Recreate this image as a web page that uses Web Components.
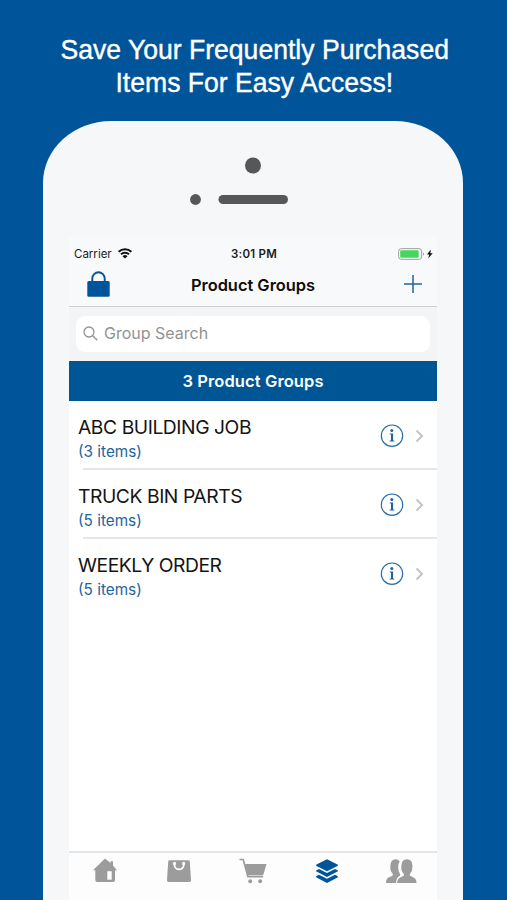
<!DOCTYPE html>
<html lang="en">
<head>
<meta charset="utf-8">
<title>Product Groups</title>
<style>
  html, body {
    margin: 0;
    height: 100%;
  }

  body {
    overflow: hidden;
    background: #005499;
    font-family: Inter, "Liberation Sans", sans-serif;
  }
</style>
</head>
<body>
<promo-page>
  <span slot="line1">Save Your Frequently Purchased</span>
  <span slot="line2">Items For Easy Access!</span>
  <phone-frame>
    <status-bar carrier="Carrier" time="3:01 PM"></status-bar>
    <nav-bar>Product Groups</nav-bar>
    <search-bar>Group Search</search-bar>
    <group-banner>3 Product Groups</group-banner>
    <group-list></group-list>
    <tab-bar></tab-bar>
  </phone-frame>
</promo-page>

<script>
class PromoPage extends HTMLElement {
  constructor() {
    super();
    this.attachShadow({ mode: "open" });
    this.shadowRoot.innerHTML = `
      <style>
        :host {
          box-sizing: border-box;
          display: flex;
          flex-direction: column;
          height: 900px;
          width: 507px;
          padding: 0 44px 0 43px;
          overflow: hidden;
        }

        header {
          box-sizing: border-box;
          height: 121px;
          padding: 33px 0 0 3px;
          flex: none;
          display: flex;
          flex-direction: column;
          align-items: center;
          color: #fff;
          font: 28px/33px "Liberation Sans", Arial, sans-serif;
          white-space: nowrap;
        }

        .line {
          transform: scaleX(0.949);
          -webkit-text-stroke: 0.4px #fff;
        }
      </style>
      <header>
        <div class="line"><slot name="line1"></slot></div>
        <div class="line"><slot name="line2"></slot></div>
      </header>
      <slot></slot>
    `;
  }
}

class PhoneFrame extends HTMLElement {
  constructor() {
    super();
    this.attachShadow({ mode: "open" });
    this.shadowRoot.innerHTML = `
      <style>
        :host {
          box-sizing: border-box;
          display: flex;
          flex-direction: column;
          flex: 1;
          padding: 0 26px;
          border-radius: 68px 68px 0 0 / 62px 62px 0 0;
          background: #f5f7f9;
        }

        .top {
          flex: none;
          height: 114px;
        }

        .top svg {
          display: block;
        }

        .screen {
          flex: 1;
          display: flex;
          flex-direction: column;
          background: #fff;
        }
      </style>
      <div class="top">
        <svg width="368" height="114" fill="#575757">
          <circle cx="184" cy="44.500" r="8"/>
          <circle cx="126.500" cy="78.500" r="5.400"/>
          <rect x="149.500" y="74" width="69.500" height="9" rx="4.500"/>
        </svg>
      </div>
      <div class="screen"><slot></slot></div>
    `;
  }
}

class StatusBar extends HTMLElement {
  constructor() {
    super();
    this.attachShadow({ mode: "open" });
  }

  connectedCallback() {
    this.shadowRoot.innerHTML = `
      <style>
        :host {
          box-sizing: border-box;
          display: grid;
          grid-template-columns: 1fr auto 1fr;
          align-items: center;
          height: 29px;
          padding: 8px 3px 0 5px;
          background: #f8f9fa;
          color: #1c1c1c;
          font-size: 11.5px;
        }

        .left {
          display: flex;
          align-items: center;
          gap: 6px;
        }

        .time {
          font-weight: 600;
          letter-spacing: 0.25px;
        }

        .right {
          justify-self: end;
        }

        svg {
          display: block;
        }
      </style>
      <div class="left">
        <span>${this.getAttribute("carrier")}</span>
        <svg width="14" height="11" viewBox="0 0 14 11">
          <path d="M0.600 3.900a9 9 0 0 1 12.800 0M3 6.300a5.700 5.700 0 0 1 8 0" fill="none" stroke="#111" stroke-width="2"/>
          <path d="M7 10.600 4.500 8.300a3.600 3.600 0 0 1 5 0z" fill="#111"/>
        </svg>
      </div>
      <span class="time">${this.getAttribute("time")}</span>
      <svg class="right" width="36" height="12" viewBox="0 0 36 12">
        <rect x="0.700" y="0.700" width="23" height="10.600" rx="2.600" fill="#fff" stroke="#9b9b9b"/>
        <rect x="2.200" y="2.200" width="18.500" height="7.600" rx="1" fill="#45d75e"/>
        <path d="M25 4.400a1.800 1.800 0 0 1 0 3.200z" fill="#9b9b9b"/>
        <path d="M32.800 1.600 29 6.600h2.300L30.200 10.400l4.500-5.200h-2.300z" fill="#111"/>
      </svg>
    `;
  }
}

class NavBar extends HTMLElement {
  constructor() {
    super();
    this.attachShadow({ mode: "open" });
    this.shadowRoot.innerHTML = `
      <style>
        :host {
          box-sizing: border-box;
          display: grid;
          grid-template-columns: 1fr auto 1fr;
          align-items: center;
          height: 43px;
          padding: 0 15px 1px 18px;
          border-bottom: 1px solid #cfd0d2;
          background: #f8f9fa;
        }

        .title {
          margin-right: 3px;
          color: #0c0c0c;
          font-size: 16.4px;
          font-weight: 600;
          white-space: nowrap;
        }

        svg {
          display: block;
        }

        .lock {
          margin-top: -2px;
        }

        .add {
          justify-self: end;
          margin-top: -1px;
        }
      </style>
      <svg class="lock" width="24" height="26" viewBox="0 0 24 26">
        <path d="M5.300 11V7.500a6.200 6.200 0 0 1 12.400 0V11" fill="none" stroke="#005499" stroke-width="1.900"/>
        <rect x="0.300" y="10" width="22.400" height="15.800" rx="1.500" fill="#005499"/>
      </svg>
      <div class="title"><slot></slot></div>
      <svg class="add" width="18" height="18" viewBox="0 0 18 18">
        <path d="M9 0v18M0 9h18" stroke="#20669f" stroke-width="1.500"/>
      </svg>
    `;
  }
}

class SearchBar extends HTMLElement {
  constructor() {
    super();
    this.attachShadow({ mode: "open" });
    this.shadowRoot.innerHTML = `
      <style>
        :host {
          box-sizing: border-box;
          display: block;
          height: 54px;
          padding: 9px 7px;
          background: #f3f4f5;
        }

        .field {
          box-sizing: border-box;
          display: flex;
          align-items: center;
          gap: 6px;
          height: 36px;
          padding: 0 7px 2px;
          border-radius: 9px;
          background: #fff;
          color: #929292;
          font-size: 16px;
        }
      </style>
      <div class="field">
        <svg width="15" height="15" viewBox="0 0 15 15" fill="none" stroke="#929292" stroke-width="1.300">
          <circle cx="6" cy="6" r="5"/>
          <path d="m9.700 9.700 4.600 4.600"/>
        </svg>
        <span><slot></slot></span>
      </div>
    `;
  }
}

class GroupBanner extends HTMLElement {
  constructor() {
    super();
    this.attachShadow({ mode: "open" });
    this.shadowRoot.innerHTML = `
      <style>
        :host {
          display: flex;
          align-items: center;
          justify-content: center;
          height: 40px;
          background: #005594;
          color: #fff;
          font-size: 16.5px;
          font-weight: 600;
          letter-spacing: 0.1px;
        }
      </style>
      <span><slot></slot></span>
    `;
  }
}

class GroupItem extends HTMLElement {
  constructor() {
    super();
    this.attachShadow({ mode: "open" });
  }

  set group(group) {
    this._group = group;
    this.render();
  }

  render() {
    this.shadowRoot.innerHTML = `
      <style>
        :host {
          box-sizing: border-box;
          display: flex;
          align-items: center;
          height: 69px;
          padding: 0 13px 0 9px;
          background: linear-gradient(#e6e6e8, #e6e6e8) 14px 100% / 100% 2px no-repeat;
        }

        :host(:last-child) {
          background: none;
        }

        .text {
          flex: 1;
          padding-top: 6px;
        }

        .name {
          color: #141414;
          font-size: 19.3px;
          line-height: 25px;
          letter-spacing: -0.45px;
        }

        .count {
          color: #1d649f;
          font-size: 15.3px;
          line-height: 23px;
        }

        .info {
          margin-right: 11px;
        }
      </style>
      <div class="text">
        <div class="name">${this._group.name}</div>
        <div class="count">(${this._group.count} items)</div>
      </div>
      <svg class="info" width="24" height="24" viewBox="0 0 24 24">
        <circle cx="12" cy="11.700" r="10.700" fill="none" stroke="#2a6da6" stroke-width="1.200"/>
        <circle cx="11.800" cy="6.500" r="1.500" fill="#1d649f"/>
        <path d="M9.800 9.500h3.300v7.100h1.200v1H9.700v-1h1.300v-6.100H9.800z" fill="#1d649f"/>
      </svg>
      <svg width="9" height="14" viewBox="0 0 9 14">
        <path d="m1.500 1.500 5.500 5.500-5.500 5.500" fill="none" stroke="#c4c4c7" stroke-width="2"/>
      </svg>
    `;
  }
}

class GroupList extends HTMLElement {
  constructor() {
    super();
    this.attachShadow({ mode: "open" });
  }

  connectedCallback() {
    this.shadowRoot.innerHTML = `
      <style>
        :host {
          display: block;
          flex: 1;
        }
      </style>
    `;

    const groups = [
      { name: "ABC BUILDING JOB", count: 3 },
      { name: "TRUCK BIN PARTS", count: 5 },
      { name: "WEEKLY ORDER", count: 5 }
    ];

    groups.forEach((group) => {
      const item = document.createElement("group-item");
      item.group = group;
      this.shadowRoot.appendChild(item);
    });
  }
}

class TabBar extends HTMLElement {
  constructor() {
    super();
    this.attachShadow({ mode: "open" });
    this.shadowRoot.innerHTML = `
      <style>
        :host {
          box-sizing: border-box;
          display: grid;
          grid-template-columns: repeat(5, 74px);
          justify-content: center;
          height: 49px;
          padding-top: 5px;
          border-top: 2px solid #e4e5e6;
          background: #fdfdfd;
        }

        svg {
          display: block;
          justify-self: center;
          fill: #9c9c9c;
        }

        .active {
          fill: #005499;
        }
      </style>
      <svg width="30" height="28" viewBox="0 0 30 28">
        <path d="M15 0.500 20.500 5V3.300h2.500V7.500L27 12.200H25V22q0 2-2 2H7.300q-2 0-2-2v-9.800H3z"/>
        <path d="M17.300 13.200h4.400v8.500h-4.400z" fill="#fdfdfd"/>
      </svg>
      <svg width="30" height="28" viewBox="0 0 30 28">
        <path d="M5.500 2.300h19q1.200 0 1.300 1.200L27 22.300q0 1.700-1.700 1.700H4.700Q3 24 3 22.300L4.200 3.500q.1-1.200 1.300-1.200z"/>
        <path d="M10.500 5.200v1.600a4.600 4.600 0 0 0 9.200 0V5.200" fill="none" stroke="#fdfdfd" stroke-width="1.800"/>
        <circle cx="10.500" cy="5.400" r="1.600" fill="#fdfdfd"/>
        <circle cx="19.700" cy="5.400" r="1.600" fill="#fdfdfd"/>
      </svg>
      <svg width="30" height="28" viewBox="0 0 30 28">
        <path d="M1.500 1.500h3.700L9.900 18.700h15.300" fill="none" stroke="#9c9c9c" stroke-width="1.700"/>
        <path d="M7 6h21.500l-3 10.200q-.3 1-1.500 1H9.600z"/>
        <circle cx="12.200" cy="23.300" r="2"/>
        <circle cx="22.200" cy="23.300" r="2"/>
      </svg>
      <svg class="active" width="30" height="28" viewBox="0 0 30 28">
        <path d="M15 1.200 25.500 6.500q1 .7 0 1.400L15 13.200 4.500 7.900q-1-.7 0-1.400z"/>
        <path d="M4.500 12.200 7 11l8 4 8-4 2.500 1.200q1 .7 0 1.400L15 19 4.500 13.600q-1-.7 0-1.400z"/>
        <path d="M4.500 18 7 16.800l8 4 8-4 2.500 1.200q1 .7 0 1.400L15 25 4.500 19.400q-1-.7 0-1.400z"/>
      </svg>
      <svg width="32" height="28" viewBox="0 0 32 28">
        <path d="M1 25q0-4.500 3-5.700l3-1.200q1.300-.6.700-2.300Q5 13 5.300 8.500 5.500 1.300 10.500 1.300q3 0 4.200 2.200-1.700 2-1.500 6-.1 3.500 1.800 6.500.5 1.400-.3 2-3.200 1-3.700 7z"/>
        <path d="M12.200 25q0-4.500 3-5.500l3-1.400q1.200-.7.500-2.300Q16 13 16.300 8.500q.2-7.200 5.700-7.200t5.500 7.200q.1 4.500-2.500 7.300-.8 1.600.5 2.300l3 1.400q3 1 3 5.500z"/>
      </svg>
    `;
  }
}

customElements.define("promo-page", PromoPage);
customElements.define("phone-frame", PhoneFrame);
customElements.define("status-bar", StatusBar);
customElements.define("nav-bar", NavBar);
customElements.define("search-bar", SearchBar);
customElements.define("group-banner", GroupBanner);
customElements.define("group-item", GroupItem);
customElements.define("group-list", GroupList);
customElements.define("tab-bar", TabBar);
</script>
</body>
</html>
